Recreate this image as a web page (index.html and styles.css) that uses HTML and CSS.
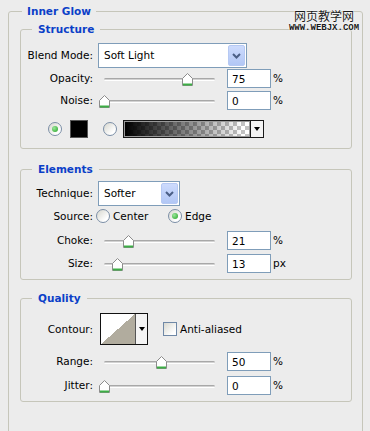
FILE: index.html
```html
<!DOCTYPE html>
<html>
<head>
    <meta charset="UTF-8">
    <title>Inner Glow</title>
    <link rel="stylesheet" href="styles.css">
</head>
<body>
<div class="watermark">
    <span class="wm-cn">网页教学网</span>
    <span class="wm-url">WWW.WEBJX.COM</span>
</div>

<fieldset class="group">
    <legend>Inner Glow</legend>

    <!-- Structure -->
    <fieldset class="box box-structure">
        <legend>Structure</legend>
        <div class="row row-select">
            <label>Blend Mode:</label>
            <div class="select select-wide">
                <span>Soft Light</span>
                <i class="drop"><svg width="9" height="6" viewBox="0 0 9 6"><path d="M1 1l3.5 3.5L8 1" fill="none" stroke="#4b5f86" stroke-width="2"/></svg></i>
            </div>
        </div>
        <div class="row row-slider gap-1">
            <label>Opacity:</label>
            <div class="slider"><div class="track">
                <svg class="thumb" style="left: 75%" width="11" height="13" viewBox="0 0 11 13"><path d="M.5 5.5l5-5 5 5v7H.5z" fill="#fff" stroke="#8c8c8c"/><path d="M1 11.5h9" stroke="#3cae45" stroke-width="2"/></svg>
            </div></div>
            <input class="num" type="text" value="75"><span class="unit">%</span>
        </div>
        <div class="row row-slider gap-3">
            <label>Noise:</label>
            <div class="slider"><div class="track">
                <svg class="thumb" style="left: 0%" width="11" height="13" viewBox="0 0 11 13"><path d="M.5 5.5l5-5 5 5v7H.5z" fill="#fff" stroke="#8c8c8c"/><path d="M1 11.5h9" stroke="#3cae45" stroke-width="2"/></svg>
            </div></div>
            <input class="num" type="text" value="0"><span class="unit">%</span>
        </div>
        <div class="row row-swatch">
            <span class="radio on"></span>
            <span class="color"></span>
            <span class="radio second"></span>
            <div class="gradient">
                <span class="ramp"></span>
                <span class="arrow"></span>
            </div>
        </div>
    </fieldset>

    <!-- Elements -->
    <fieldset class="box box-elements">
        <legend>Elements</legend>
        <div class="row row-select">
            <label>Technique:</label>
            <div class="select select-narrow">
                <span>Softer</span>
                <i class="drop"><svg width="9" height="6" viewBox="0 0 9 6"><path d="M1 1l3.5 3.5L8 1" fill="none" stroke="#4b5f86" stroke-width="2"/></svg></i>
            </div>
        </div>
        <div class="row row-source">
            <label>Source:</label>
            <span class="opt first"><span class="radio"></span>Center</span>
            <span class="opt"><span class="radio on"></span>Edge</span>
        </div>
        <div class="row row-slider gap-7">
            <label>Choke:</label>
            <div class="slider"><div class="track">
                <svg class="thumb" style="left: 22%" width="11" height="13" viewBox="0 0 11 13"><path d="M.5 5.5l5-5 5 5v7H.5z" fill="#fff" stroke="#8c8c8c"/><path d="M1 11.5h9" stroke="#3cae45" stroke-width="2"/></svg>
            </div></div>
            <input class="num" type="text" value="21"><span class="unit">%</span>
        </div>
        <div class="row row-slider gap-4">
            <label>Size:</label>
            <div class="slider"><div class="track">
                <svg class="thumb" style="left: 11.5%" width="11" height="13" viewBox="0 0 11 13"><path d="M.5 5.5l5-5 5 5v7H.5z" fill="#fff" stroke="#8c8c8c"/><path d="M1 11.5h9" stroke="#3cae45" stroke-width="2"/></svg>
            </div></div>
            <input class="num" type="text" value="13"><span class="unit">px</span>
        </div>
    </fieldset>

    <!-- Quality -->
    <fieldset class="box box-quality">
        <legend>Quality</legend>
        <div class="row row-contour">
            <label>Contour:</label>
            <div class="contour">
                <span class="curve"></span>
                <span class="arrow"></span>
            </div>
            <span class="check"></span>
            <span class="check-text">Anti-aliased</span>
        </div>
        <div class="row row-slider gap-7">
            <label>Range:</label>
            <div class="slider"><div class="track">
                <svg class="thumb" style="left: 51%" width="11" height="13" viewBox="0 0 11 13"><path d="M.5 5.5l5-5 5 5v7H.5z" fill="#fff" stroke="#8c8c8c"/><path d="M1 11.5h9" stroke="#3cae45" stroke-width="2"/></svg>
            </div></div>
            <input class="num" type="text" value="50"><span class="unit">%</span>
        </div>
        <div class="row row-slider gap-5">
            <label>Jitter:</label>
            <div class="slider"><div class="track">
                <svg class="thumb" style="left: 0%" width="11" height="13" viewBox="0 0 11 13"><path d="M.5 5.5l5-5 5 5v7H.5z" fill="#fff" stroke="#8c8c8c"/><path d="M1 11.5h9" stroke="#3cae45" stroke-width="2"/></svg>
            </div></div>
            <input class="num" type="text" value="0"><span class="unit">%</span>
        </div>
    </fieldset>
</fieldset>
</body>
</html>
```

FILE: styles.css
```css
* {
    box-sizing: border-box;
    margin: 0;
    padding: 0;
}

html, body {
    overflow: hidden;
}

body {
    position: relative;
    height: 431px;
    padding: 4px 0 0 8px;
    background-color: #ececec;
    color: #000;
    font-family: 'DejaVu Sans', Tahoma, sans-serif;
    font-size: 10.5px;
    line-height: 13px;
}

/* group boxes */

fieldset {
    border: 1px solid #c6c6ba;
    border-radius: 3px;
}

legend {
    font-weight: bold;
    color: #0b3fc8;
    line-height: 15px;
}

.group {
    width: 355px;
    padding: 3px 10px 40px 11px;
}

.group > legend {
    margin-left: 2px;
    padding: 0 5px;
}

.box > legend {
    margin-left: 11px;
    padding: 0 6px;
}

.box-structure {
    padding: 6px 0 10px;
}

.box-elements {
    margin-top: 13px;
    padding: 4px 0 6px;
}

.box-quality {
    margin-top: 11px;
    padding: 7px 0 6px;
}

/* rows */

.row {
    display: flex;
    align-items: center;
    height: 19px;
}

.row > label {
    flex: none;
    width: 72px;
    text-align: right;
}

.gap-1 { margin-top: 1px; }
.gap-3 { margin-top: 3px; }
.gap-4 { margin-top: 4px; }
.gap-5 { margin-top: 5px; }
.gap-7 { margin-top: 7px; }

.row-select {
    height: 25px;
}

/* dropdowns */

.select {
    display: flex;
    height: 25px;
    margin-left: 5px;
    padding: 1px;
    border: 1px solid #7f9db9;
    background-color: #fff;
}

.select span {
    flex: 1;
    padding-left: 4px;
    line-height: 21px;
}

.select-wide {
    width: 149px;
}

.select-narrow {
    width: 82px;
}

.drop {
    display: flex;
    align-items: center;
    justify-content: center;
    width: 17px;
    border: 1px solid #b6c9f3;
    border-radius: 2px;
    background: linear-gradient(#cddbfd, #b2c7f5);
}

/* sliders */

.slider {
    align-self: stretch;
    width: 122px;
    margin-left: 5px;
    padding: 9px 5px 0 6px;
}

.track {
    position: relative;
    height: 3px;
    border-top: 1px solid #a8a8a8;
    border-bottom: 1px solid #fff;
    border-radius: 2px;
    background-color: #d2d2d2;
}

.thumb {
    position: absolute;
    top: -6px;
    margin-left: -5px;
    display: block;
}

.num {
    width: 44px;
    height: 19px;
    margin-left: 7px;
    padding-left: 4px;
    border: 1px solid #7f9db9;
    background-color: #fff;
    font: inherit;
    color: #000;
    outline: none;
}

.unit {
    margin-left: 2px;
}

/* radios, swatches */

.radio {
    flex: none;
    display: flex;
    align-items: center;
    justify-content: center;
    width: 14px;
    height: 14px;
    border: 1px solid #7b8ea6;
    border-radius: 50%;
    background: linear-gradient(135deg, #d6d6ce, #fff 75%);
}

.radio.on::after {
    content: '';
    width: 6px;
    height: 6px;
    border-radius: 50%;
    background: radial-gradient(circle at 35% 35%, #9be69b, #22a322);
}

.row-swatch {
    height: 18px;
    margin-top: 10px;
    padding-left: 27px;
}

.color {
    width: 18px;
    height: 18px;
    margin-left: 8px;
    border: 1px solid #555;
    background-color: #000;
}

.radio.second {
    margin-left: 15px;
}

.gradient {
    display: flex;
    width: 141px;
    height: 18px;
    margin-left: 6px;
    border: 1px solid #1a1a1a;
}

.ramp {
    flex: 1;
    border: 1px solid #9a9a9a;
    background:
        linear-gradient(to right, #000, rgba(0, 0, 0, 0) 95%),
        repeating-conic-gradient(#c2c2c2 0 25%, #fff 0 50%) 0 0 / 8px 8px;
}

.arrow {
    display: flex;
    align-items: center;
    justify-content: center;
    width: 13px;
    border-left: 1px solid #1a1a1a;
    background-color: #f4f4f4;
}

.arrow::after {
    content: '';
    border-style: solid;
    border-width: 4px 3px 0;
    border-color: #000 transparent transparent;
}

/* source */

.row-source {
    height: 16px;
    margin-top: 2px;
}

.opt {
    display: flex;
    align-items: center;
    gap: 3px;
    width: 72px;
}

.opt.first {
    margin-left: 3px;
}

/* contour */

.row-contour {
    height: 32px;
}

.contour {
    display: flex;
    width: 48px;
    height: 32px;
    margin-left: 7px;
    border: 1px solid #111;
}

.curve {
    flex: 1;
    background: linear-gradient(to bottom right, #fff 50%, #b1ac9e 50%);
}

.contour .arrow {
    width: 12px;
    border-left-color: #555;
}

.check {
    width: 14px;
    height: 14px;
    margin-left: 15px;
    border: 1px solid #6f88a6;
    background: linear-gradient(135deg, #d8d8d0, #fff 80%);
}

.check-text {
    margin-left: 3px;
}

/* watermark */

.watermark {
    position: absolute;
    top: 8px;
    left: 288px;
    display: flex;
    flex-direction: column;
    align-items: center;
    width: 72px;
    color: #1a1a1a;
    text-shadow: 0 0 2px #fff, 0 0 1px #fff;
}

.wm-cn {
    font-family: 'Noto Sans CJK SC', sans-serif;
    font-size: 12px;
    line-height: 15px;
}

.wm-url {
    margin-top: 1px;
    font-family: 'Liberation Mono', monospace;
    font-size: 9px;
    font-weight: bold;
    line-height: 9px;
}
```
